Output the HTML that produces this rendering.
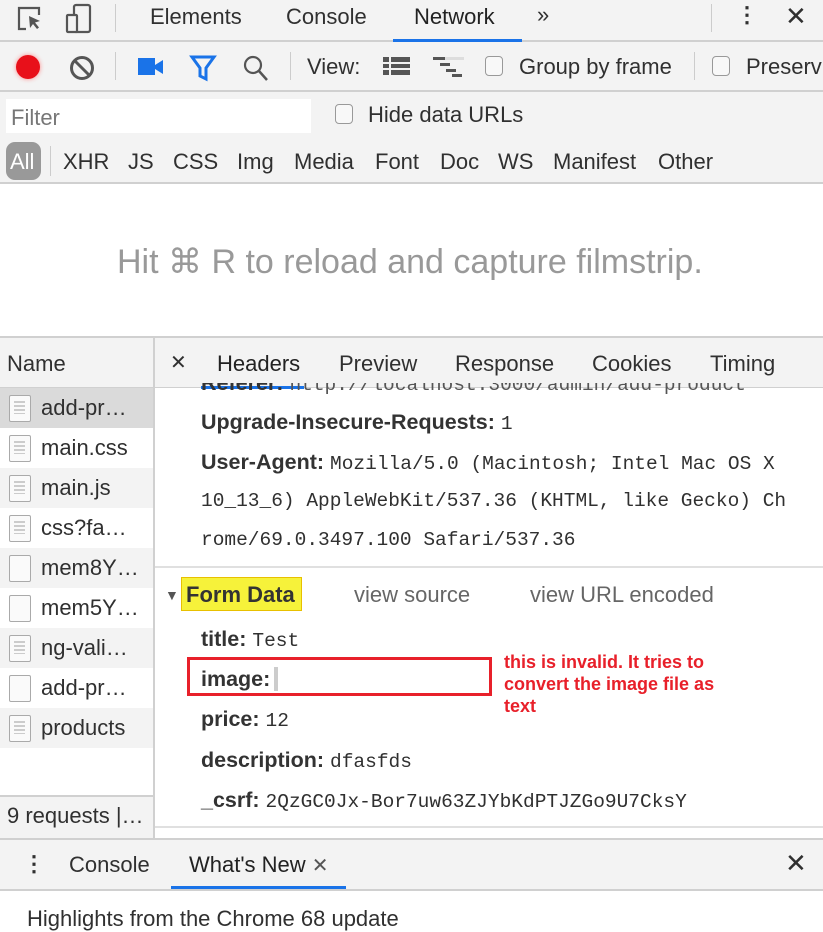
<!DOCTYPE html>
<html><head><meta charset="utf-8"><style>
*{box-sizing:border-box;margin:0;padding:0}
body{width:823px;height:923px;overflow:hidden;background:#fff;font-family:"Liberation Sans",sans-serif;color:#303030;position:relative}
.a{position:absolute;white-space:nowrap}
.bar{position:absolute;left:0;width:823px;background:#f3f3f3;border-bottom:2px solid #d0d0d0}
.t{font-size:22px;line-height:26px}
.mono{font-family:"Liberation Mono",monospace;font-size:19.5px}
.kv{font-size:21.5px}
.kv b{color:#333}
.cb{position:absolute;width:18px;height:20px;border:1.5px solid #999;border-radius:4px;background:#f8f8f8}
.row{position:absolute;left:0;width:153px;height:40px}
.ic{position:absolute;left:9px;top:7px;width:22px;height:27px;border:1.5px solid #aaa;background:#fafafa;border-radius:2px}
.ic.l::after{content:"";position:absolute;left:4px;top:5px;width:11px;height:13px;background:repeating-linear-gradient(#ccc 0 2px,transparent 2px 4px)}
.rt{position:absolute;left:41px;top:7px;font-size:22px}
</style></head><body>
<div class="bar" style="top:0;height:42px"></div>
<svg class="a" style="left:16px;top:5px" width="30" height="30" viewBox="0 0 30 30"><path d="M10 24H3V3h20v7" fill="none" stroke="#555" stroke-width="2.2"/><path d="M13 11l11 5-5 1.5 4 5-2 1.5-4-5-3 4z" fill="#555"/></svg>
<svg class="a" style="left:64px;top:3px" width="30" height="32" viewBox="0 0 30 32"><rect x="10" y="2" width="16" height="27" rx="2" fill="none" stroke="#555" stroke-width="2.2"/><rect x="3" y="12" width="10" height="17" rx="1" fill="#f3f3f3" stroke="#555" stroke-width="2.2"/></svg>
<div class="a" style="left:115px;top:4px;width:1px;height:28px;background:#ccc"></div>
<div class="a t" style="left:150px;top:4px">Elements</div>
<div class="a t" style="left:286px;top:4px">Console</div>
<div class="a t" style="left:414px;top:4px;color:#222">Network</div>
<div class="a" style="left:393px;top:39px;width:129px;height:3px;background:#1a73e8"></div>
<div class="a t" style="left:537px;top:2px">»</div>
<div class="a" style="left:711px;top:4px;width:1px;height:28px;background:#ccc"></div>
<div class="a t" style="left:736px;top:2px;font-weight:bold">⋮</div>
<div class="a t" style="left:785px;top:3px;font-size:26px">✕</div>
<div class="bar" style="top:42px;height:50px"></div>
<div class="a" style="left:16px;top:55px;width:24px;height:24px;border-radius:50%;background:#e8101a;box-shadow:0 0 5px #f88"></div>
<svg class="a" style="left:68px;top:54px" width="28" height="28"><circle cx="14" cy="14" r="10.5" fill="none" stroke="#555" stroke-width="3"/><line x1="7" y1="7" x2="21" y2="21" stroke="#555" stroke-width="3"/></svg>
<div class="a" style="left:115px;top:52px;width:1px;height:28px;background:#ccc"></div>
<svg class="a" style="left:137px;top:56px" width="28" height="22"><rect x="1" y="2" width="17" height="17" fill="#1a73e8"/><path d="M18 9l8-5v14l-8-5z" fill="#1a73e8"/></svg>
<svg class="a" style="left:189px;top:54px" width="28" height="28"><path d="M3 3h22L17 14v11l-6-3V14z" fill="none" stroke="#1a73e8" stroke-width="3"/></svg>
<svg class="a" style="left:242px;top:54px" width="28" height="28"><circle cx="11" cy="11" r="8" fill="none" stroke="#555" stroke-width="2.2"/><line x1="17" y1="17" x2="25" y2="26" stroke="#555" stroke-width="2.5"/></svg>
<div class="a" style="left:290px;top:52px;width:1px;height:28px;background:#ccc"></div>
<div class="a t" style="left:307px;top:54px">View:</div>
<svg class="a" style="left:382px;top:56px" width="30" height="22"><g fill="#555"><rect x="1" y="1" width="6" height="5"/><rect x="9" y="1" width="19" height="5"/><rect x="1" y="8" width="6" height="4"/><rect x="9" y="8" width="19" height="4"/><rect x="1" y="14" width="6" height="5"/><rect x="9" y="14" width="19" height="5"/></g></svg>
<svg class="a" style="left:432px;top:56px" width="34" height="22"><g fill="#555"><rect x="1" y="1" width="12" height="3"/><rect x="8" y="7" width="10" height="3"/><rect x="14" y="13" width="10" height="3"/><rect x="20" y="18" width="10" height="3"/></g><rect x="13" y="1" width="19" height="3" fill="#ddd"/></svg>
<div class="cb" style="left:485px;top:56px"></div>
<div class="a t" style="left:519px;top:54px">Group by frame</div>
<div class="a" style="left:694px;top:52px;width:1px;height:28px;background:#ccc"></div>
<div class="cb" style="left:712px;top:56px"></div>
<div class="a t" style="left:746px;top:54px">Preserv</div>
<div class="a" style="left:0;top:92px;width:823px;height:92px;background:#f3f3f3;border-bottom:2px solid #d0d0d0"></div>
<div class="a" style="left:6px;top:99px;width:305px;height:34px;background:#fff"></div>
<div class="a t" style="left:11px;top:105px;color:#777">Filter</div>
<div class="cb" style="left:335px;top:104px"></div>
<div class="a t" style="left:368px;top:102px">Hide data URLs</div>
<div class="a" style="left:6px;top:142px;width:35px;height:38px;border-radius:9px;background:#999"></div>
<div class="a t" style="left:10px;top:149px;color:#fff">All</div>
<div class="a" style="left:50px;top:146px;width:1px;height:30px;background:#ccc"></div>
<div class="a t" style="left:63px;top:149px">XHR</div>
<div class="a t" style="left:128px;top:149px">JS</div>
<div class="a t" style="left:173px;top:149px">CSS</div>
<div class="a t" style="left:237px;top:149px">Img</div>
<div class="a t" style="left:294px;top:149px">Media</div>
<div class="a t" style="left:375px;top:149px">Font</div>
<div class="a t" style="left:440px;top:149px">Doc</div>
<div class="a t" style="left:498px;top:149px">WS</div>
<div class="a t" style="left:553px;top:149px">Manifest</div>
<div class="a t" style="left:658px;top:149px">Other</div>
<div class="a" style="left:117px;top:242px;font-size:34px;color:#999">Hit ⌘ R to reload and capture filmstrip.</div>
<div class="a" style="left:0;top:336px;width:823px;height:2px;background:#d0d0d0"></div>
<div class="a" style="left:0;top:338px;width:153px;height:50px;background:#f3f3f3;border-bottom:1px solid #d0d0d0"></div>
<div class="a t" style="left:7px;top:351px">Name</div>
<div class="row" style="top:388px;background:#dadada"><div class="ic l"></div><div class="rt">add-pr…</div></div>
<div class="row" style="top:428px"><div class="ic l"></div><div class="rt">main.css</div></div>
<div class="row" style="top:468px;background:#f3f3f3"><div class="ic l"></div><div class="rt">main.js</div></div>
<div class="row" style="top:508px"><div class="ic l"></div><div class="rt">css?fa…</div></div>
<div class="row" style="top:548px;background:#f3f3f3"><div class="ic"></div><div class="rt">mem8Y…</div></div>
<div class="row" style="top:588px"><div class="ic"></div><div class="rt">mem5Y…</div></div>
<div class="row" style="top:628px;background:#f3f3f3"><div class="ic l"></div><div class="rt">ng-vali…</div></div>
<div class="row" style="top:668px"><div class="ic"></div><div class="rt">add-pr…</div></div>
<div class="row" style="top:708px;background:#f3f3f3"><div class="ic l"></div><div class="rt">products</div></div>
<div class="a" style="left:0;top:795px;width:153px;height:43px;background:#f3f3f3;border-top:2px solid #d0d0d0"></div>
<div class="a t" style="left:7px;top:803px">9 requests |…</div>
<div class="a" style="left:153px;top:338px;width:2px;height:500px;background:#d0d0d0"></div>
<div class="a" style="left:155px;top:338px;width:668px;height:50px;background:#f3f3f3;border-bottom:1px solid #d0d0d0"></div>
<div class="a t" style="left:170px;top:350px;font-size:20px">✕</div>
<div class="a t" style="left:217px;top:351px;color:#222">Headers</div>
<div class="a t" style="left:339px;top:351px">Preview</div>
<div class="a t" style="left:455px;top:351px">Response</div>
<div class="a t" style="left:592px;top:351px">Cookies</div>
<div class="a t" style="left:710px;top:351px">Timing</div>
<div class="a" style="left:201px;top:386px;width:103px;height:3px;background:#1a73e8"></div>
<div class="a kv" style="left:201px;top:371px;color:#555;clip-path:inset(12px 0 0 0)"><b>Referer:</b> <span class="mono">http://localhost:3000/admin/add-product</span></div>
<div class="a kv" style="left:201px;top:410px"><b>Upgrade-Insecure-Requests:</b> <span class="mono">1</span></div>
<div class="a kv" style="left:201px;top:450px"><b>User-Agent:</b> <span class="mono">Mozilla/5.0 (Macintosh; Intel Mac OS X</span></div>
<div class="a mono" style="left:201px;top:490px">10_13_6) AppleWebKit/537.36 (KHTML, like Gecko) Ch</div>
<div class="a mono" style="left:201px;top:529px">rome/69.0.3497.100 Safari/537.36</div>
<div class="a" style="left:155px;top:566px;width:668px;height:2px;background:#e0e0e0"></div>
<div class="a" style="left:165px;top:587px;font-size:14px;color:#555">▼</div>
<div class="a" style="left:181px;top:577px;width:121px;height:34px;background:#f6f23a;border:1px solid #e8c000"></div>
<div class="a" style="left:186px;top:582px;font-size:22px;font-weight:bold;color:#333">Form Data</div>
<div class="a t" style="left:354px;top:582px;color:#666">view source</div>
<div class="a t" style="left:530px;top:582px;color:#666">view URL encoded</div>
<div class="a kv" style="left:201px;top:627px"><b>title:</b> <span class="mono">Test</span></div>
<div class="a" style="left:187px;top:657px;width:305px;height:39px;border:3px solid #e8202a"></div>
<div class="a kv" style="left:201px;top:667px"><b>image:</b></div>
<div class="a" style="left:274px;top:667px;width:4px;height:24px;background:#ccc"></div>
<div class="a kv" style="left:201px;top:707px"><b>price:</b> <span class="mono">12</span></div>
<div class="a kv" style="left:201px;top:748px"><b>description:</b> <span class="mono">dfasfds</span></div>
<div class="a kv" style="left:201px;top:788px"><b>_csrf:</b> <span class="mono">2QzGC0Jx-Bor7uw63ZJYbKdPTJZGo9U7CksY</span></div>
<div class="a" style="left:504px;top:651px;font-size:18px;line-height:22px;color:#e8202a;font-weight:bold">this is invalid. It tries to<br>convert the image file as<br>text</div>
<div class="a" style="left:155px;top:826px;width:668px;height:12px;border-top:2px solid #e0e0e0"></div>
<div class="a" style="left:0;top:838px;width:823px;height:53px;background:#f3f3f3;border-top:2px solid #d0d0d0;border-bottom:2px solid #d0d0d0"></div>
<div class="a t" style="left:23px;top:851px;font-weight:bold">⋮</div>
<div class="a t" style="left:69px;top:852px">Console</div>
<div class="a t" style="left:189px;top:852px;color:#222">What's New <span style="font-size:20px;color:#555">✕</span></div>
<div class="a" style="left:171px;top:886px;width:175px;height:3px;background:#1a73e8"></div>
<div class="a t" style="left:785px;top:850px;font-size:26px">✕</div>
<div class="a t" style="left:27px;top:906px">Highlights from the Chrome 68 update</div>
</body></html>
